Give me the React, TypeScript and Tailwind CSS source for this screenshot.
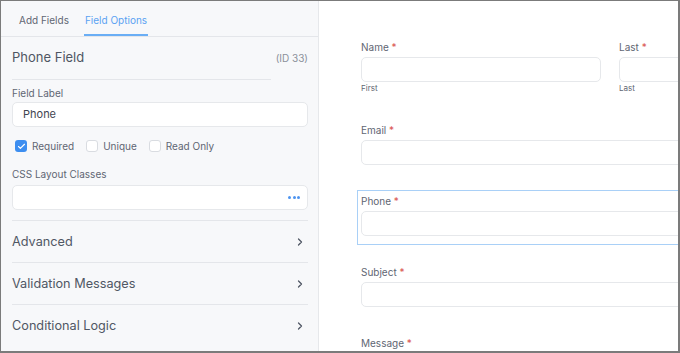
import { ChevronRight, Check } from 'lucide-react'

const font = { fontFamily: 'Inter, "Noto Sans", sans-serif' }

function Divider({ className = '' }: { className?: string }) {
  return <div className={`h-px bg-[#e4e6ea] ${className}`} />
}

function Box({ checked, label }: { checked?: boolean; label: string }) {
  return (
    <label className="flex h-[14px] items-center gap-[5px]">
      <span
        className={
          checked
            ? 'flex size-[12px] items-center justify-center rounded-[3px] bg-[#3d8ef0]'
            : 'size-[12px] rounded-[3px] border border-[#d9dce1] bg-white'
        }
      >
        {checked && <Check className="size-[9px] text-white" strokeWidth={3} />}
      </span>
      <span className="text-[10px] leading-[14px] text-[#5f6673]">{label}</span>
    </label>
  )
}

function Section({ title }: { title: string }) {
  return (
    <div className="flex h-[41px] items-center justify-between pr-[2px]">
      <span className="text-[12.7px] text-[#505764]">{title}</span>
      <ChevronRight className="size-[12px] text-[#505764]" strokeWidth={2.5} />
    </div>
  )
}

function Field({ label, sub, className = '' }: { label: string; sub?: string; className?: string }) {
  return (
    <div className={className}>
      <div className="mb-[3px] h-[14px] text-[10px] leading-[14px] text-[#5f6673]">
        {label} <span className="text-[#d9534f]">*</span>
      </div>
      <div className="h-[25px] rounded-[5px] border border-[#e6e8eb] bg-white" />
      {sub && <div className="mt-[1px] text-[8px] leading-[10px] text-[#5f6673]">{sub}</div>}
    </div>
  )
}

export default function App() {
  return (
    <div
      style={font}
      className="flex h-[353px] w-[680px] overflow-hidden border-t border-l border-r-2 border-b-2 border-[#7b7b7b] bg-white"
    >
      <aside className="flex w-[318px] shrink-0 flex-col border-r border-[#e6e8eb] bg-[#f7f8fa]">
        <div className="flex h-[36px] shrink-0 items-end gap-[14px] border-b border-[#e4e6ea] pl-[17px]">
          <div className="px-[1px] pb-[9px] text-[10px] leading-[14px] text-[#5f6673]">Add Fields</div>
          <div className="border-b-2 border-[#6aaef5] px-[1px] pb-[7px] text-[10px] leading-[14px] text-[#5aa2f2]">
            Field Options
          </div>
        </div>
        <div className="pl-[11px] pr-[10px]">
          <div className="flex h-[42px] items-center justify-between">
            <span className="text-[13px] text-[#4f5663]">Phone Field</span>
            <span className="text-[10px] text-[#8a909b]">(ID 33)</span>
          </div>
          <Divider className="mr-[37px]" />
          <div className="mt-[6px] h-[14px] text-[10px] leading-[14px] text-[#5f6673]">Field Label</div>
          <div className="mt-[2px] flex h-[25px] items-center rounded-[5px] border border-[#e6e8eb] bg-white px-[10px] text-[11px] text-[#3f4550]">
            Phone
          </div>
          <div className="mt-[12px] flex items-center gap-[12px] pl-[3px]">
            <Box checked label="Required" />
            <Box label="Unique" />
            <Box label="Read Only" />
          </div>
          <div className="mt-[14px] h-[14px] text-[10px] leading-[14px] text-[#5f6673]">CSS Layout Classes</div>
          <div className="mt-[4px] flex h-[25px] items-center justify-end rounded-[5px] border border-[#e6e8eb] bg-white pr-[7px]">
            <span className="flex gap-[1.5px]">
              <span className="size-[3px] rounded-full bg-[#4d94f0]" />
              <span className="size-[3px] rounded-full bg-[#4d94f0]" />
              <span className="size-[3px] rounded-full bg-[#4d94f0]" />
            </span>
          </div>
          <Divider className="mt-[10px]" />
          <Section title="Advanced" />
          <Divider />
          <Section title="Validation Messages" />
          <Divider />
          <Section title="Conditional Logic" />
        </div>
      </aside>
      <main className="flex-1 overflow-hidden pl-[42px] pt-[39px]">
        <div className="flex gap-[18px]">
          <Field label="Name" sub="First" className="w-[240px] shrink-0" />
          <Field label="Last" sub="Last" className="w-[120px] shrink-0" />
        </div>
        <Field label="Email" className="mt-[30px] w-[400px]" />
        <div className="-ml-[4px] mt-[25px] w-[420px] border border-[#a9d0f7] pb-[8px] pl-[3px] pt-[3px]">
          <Field label="Phone" />
        </div>
        <Field label="Subject" className="mt-[20px] w-[400px]" />
        <Field label="Message" className="mt-[29px] w-[400px]" />
      </main>
    </div>
  )
}
